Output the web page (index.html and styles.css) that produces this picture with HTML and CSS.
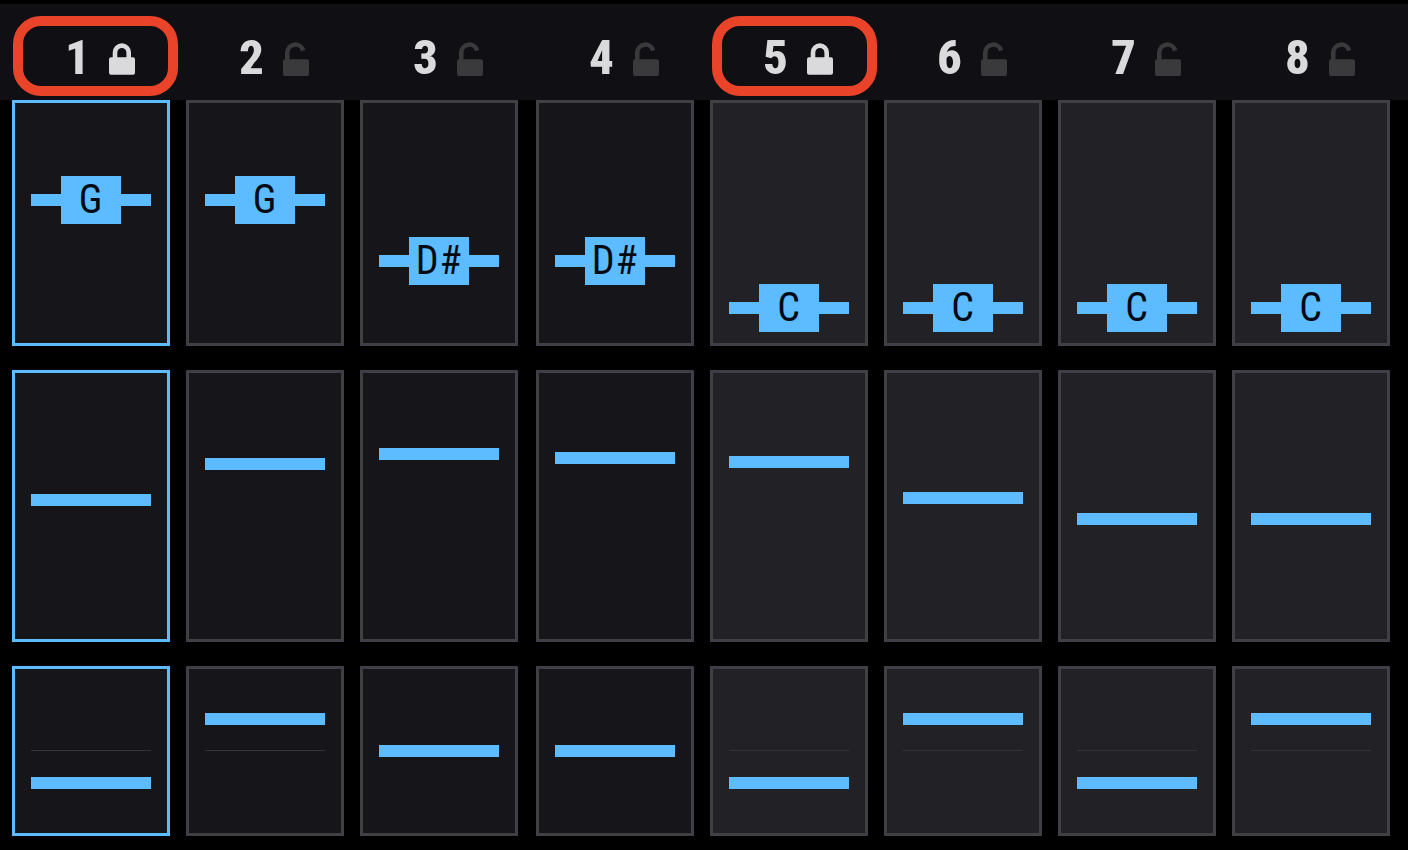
FILE: index.html
```html
<!DOCTYPE html>
<html>
<head>
<meta charset="utf-8">
<title>Sequencer</title>
<link rel="stylesheet" href="styles.css">
</head>
<body>

<svg class="defs" width="0" height="0">
	<symbol id="locked" viewBox="0 0 26 36">
		<path d="M6 20V12.45a6.85 6.85 0 0 1 13.7 0V20" fill="none" stroke="currentColor" stroke-width="4.6"/>
		<rect x="0" y="17.3" width="26" height="17.4" rx="2" fill="currentColor"/>
	</symbol>
	<symbol id="unlocked" viewBox="0 0 26 36">
		<path d="M4.25 21V12.35a8.1 8.1 0 0 1 15.9 -1.8" fill="none" stroke="currentColor" stroke-width="4.5"/>
		<rect x="0" y="19.3" width="26" height="16.7" rx="2" fill="currentColor"/>
	</symbol>
</svg>

<!--track header-->
<div class="header">
	<div class="trackHead on"><span class="num">1</span><svg class="lock lockOn"><use href="#locked"/></svg></div>
	<div class="trackHead"><span class="num">2</span><svg class="lock"><use href="#unlocked"/></svg></div>
	<div class="trackHead"><span class="num">3</span><svg class="lock"><use href="#unlocked"/></svg></div>
	<div class="trackHead"><span class="num">4</span><svg class="lock"><use href="#unlocked"/></svg></div>
	<div class="trackHead on on5"><span class="num">5</span><svg class="lock lockOn"><use href="#locked"/></svg></div>
	<div class="trackHead"><span class="num">6</span><svg class="lock"><use href="#unlocked"/></svg></div>
	<div class="trackHead"><span class="num">7</span><svg class="lock"><use href="#unlocked"/></svg></div>
	<div class="trackHead"><span class="num">8</span><svg class="lock"><use href="#unlocked"/></svg></div>
</div>

<!--slider grid-->
<div class="grid">
	<!--pitch-->
	<div class="cell sel"><div class="note" style="margin-top: 73px"><span class="noteLabel">G</span></div></div>
	<div class="cell"><div class="note" style="margin-top: 73px"><span class="noteLabel">G</span></div></div>
	<div class="cell"><div class="note" style="margin-top: 134px"><span class="noteLabel">D#</span></div></div>
	<div class="cell"><div class="note" style="margin-top: 134px"><span class="noteLabel">D#</span></div></div>
	<div class="cell alt"><div class="note" style="margin-top: 181px"><span class="noteLabel">C</span></div></div>
	<div class="cell alt"><div class="note" style="margin-top: 181px"><span class="noteLabel">C</span></div></div>
	<div class="cell alt"><div class="note" style="margin-top: 181px"><span class="noteLabel">C</span></div></div>
	<div class="cell alt"><div class="note" style="margin-top: 181px"><span class="noteLabel">C</span></div></div>

	<!--level-->
	<div class="cell sel"><div class="bar" style="margin-top: 121px"></div></div>
	<div class="cell"><div class="bar" style="margin-top: 85px"></div></div>
	<div class="cell"><div class="bar" style="margin-top: 75px"></div></div>
	<div class="cell"><div class="bar" style="margin-top: 79px"></div></div>
	<div class="cell alt"><div class="bar" style="margin-top: 83px"></div></div>
	<div class="cell alt"><div class="bar" style="margin-top: 119px"></div></div>
	<div class="cell alt"><div class="bar" style="margin-top: 140px"></div></div>
	<div class="cell alt"><div class="bar" style="margin-top: 140px"></div></div>

	<!--offset-->
	<div class="cell sel mid"><div class="bar" style="margin-top: 108px"></div></div>
	<div class="cell mid"><div class="bar" style="margin-top: 44px"></div></div>
	<div class="cell mid"><div class="bar" style="margin-top: 76px"></div></div>
	<div class="cell mid"><div class="bar" style="margin-top: 76px"></div></div>
	<div class="cell alt mid"><div class="bar" style="margin-top: 108px"></div></div>
	<div class="cell alt mid"><div class="bar" style="margin-top: 44px"></div></div>
	<div class="cell alt mid"><div class="bar" style="margin-top: 108px"></div></div>
	<div class="cell alt mid"><div class="bar" style="margin-top: 44px"></div></div>
</div>

</body>
</html>
```

FILE: styles.css
```css
html, body {
	margin: 0;
	padding: 0;
	background-color: #000000;
	overflow: hidden;
}

body {
	padding-top: 4px;
	font-family: "Roboto", "Liberation Sans", sans-serif;
}

.defs {
	display: block;
	height: 0;
}

.header, .grid {
	display: grid;
	grid-template-columns: 158px 158px 160px 158px 158px 158px 158px 158px;
	column-gap: 16px;
	padding-left: 12px;
}

.header {
	height: 96px;
	background-color: #101014;
}

.grid {
	grid-template-rows: 246px 272px 170px;
	row-gap: 24px;
}

.trackHead {
	position: relative;
	display: flex;
	align-items: center;
	justify-content: center;
	gap: 21px;
	width: 158px;
	padding-left: 20px;
	box-sizing: border-box;
	padding-top: 12px;
}

.trackHead.on::after {
	content: "";
	position: absolute;
	left: 1px;
	top: 12px;
	width: 165px;
	height: 80px;
	box-sizing: border-box;
	border: 10px solid #e9432a;
	border-radius: 28px;
}

.trackHead.on5::after {
	left: 2px;
}

.num {
	display: flex;
	justify-content: center;
	width: 21px;
	color: #dadadc;
	font-size: 49px;
	line-height: 48px;
	font-weight: 800;
	font-stretch: 75%;
}

.lock {
	width: 26px;
	height: 36px;
	color: #3a3a3c;
}

.lockOn {
	color: #dadadc;
}

.cell {
	position: relative;
	width: 158px;
	box-sizing: border-box;
	display: flex;
	flex-direction: column;
	align-items: center;
	background-color: #15151a;
	border: 3px solid #3f3f45;
}

.cell.alt {
	background-color: #212126;
}

.cell.sel {
	border-color: #5cbcff;
}

.cell.mid::before {
	content: "";
	position: absolute;
	left: 16px;
	top: 81px;
	width: 120px;
	height: 1px;
	background-color: #333338;
}

.bar {
	position: relative;
	width: 120px;
	height: 12px;
	flex: none;
	background-color: #5cbcff;
}

.note {
	position: relative;
	width: 120px;
	height: 48px;
	flex: none;
	display: flex;
	justify-content: center;
	background: linear-gradient(#5cbcff, #5cbcff) center / 100% 12px no-repeat;
}

.noteLabel {
	width: 60px;
	height: 48px;
	line-height: 48px;
	text-align: center;
	background-color: #5cbcff;
	color: #030a14;
	font-size: 40px;
	font-stretch: 75%;
	letter-spacing: 1px;
	white-space: nowrap;
}
```
